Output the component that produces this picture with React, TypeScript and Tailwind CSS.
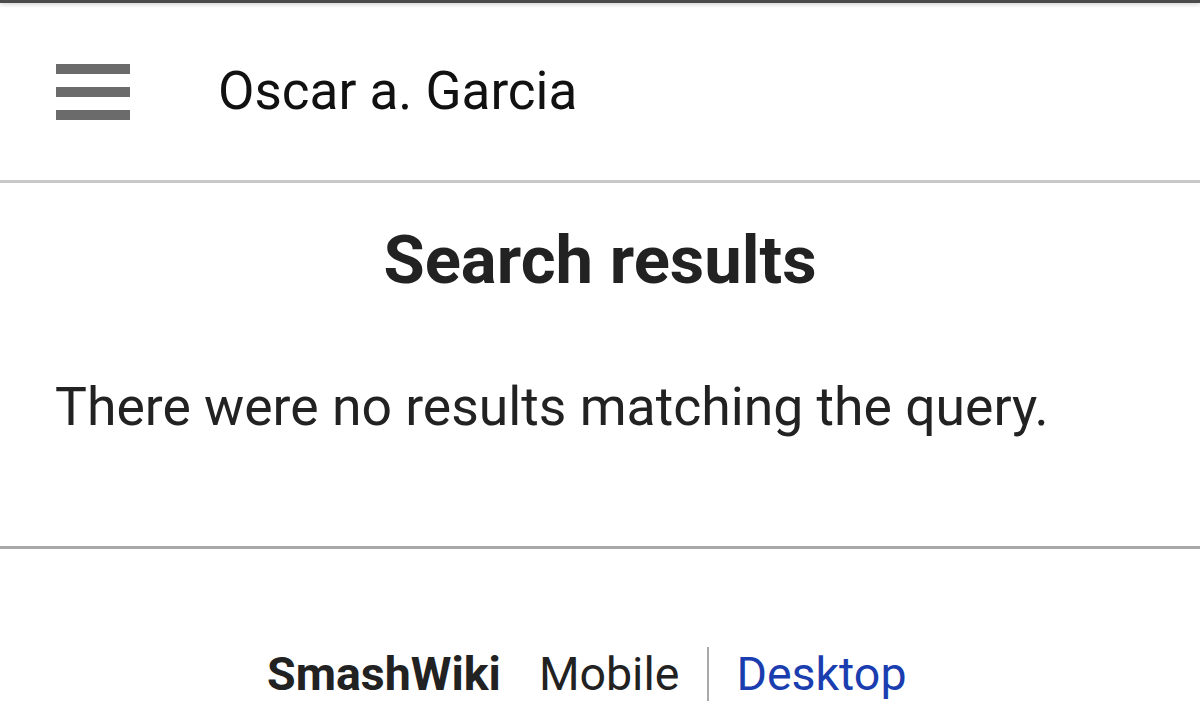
import React from "react";

const Hamburger = () => (
  <div className="flex flex-col gap-[13px] w-[74px]">
    <div className="h-[10px] bg-[#6b6b6b]" />
    <div className="h-[10px] bg-[#6b6b6b]" />
    <div className="h-[10px] bg-[#6b6b6b]" />
  </div>
);

export default function App() {
  return (
    <div className="w-[1200px] h-[719px] bg-white overflow-hidden font-['Roboto',sans-serif]">
      {/* status strip */}
      <div className="h-[3px] bg-[#4b4b4b] shadow-[0_1px_4px_rgba(0,0,0,0.25)]" />

      {/* header */}
      <div className="h-[180px] flex items-center pl-[56px] border-b-[3px] border-[#c8c8c8]">
        <Hamburger />
        <span className="ml-[88px] text-[53px] leading-none text-[#111]">
          Oscar a. Garcia
        </span>
      </div>

      {/* content */}
      <div className="h-[366px] border-b-[3px] border-[#a8a8a8]">
        <h1 className="pt-[44px] text-center text-[67px] leading-none font-bold text-[#222]">
          Search results
        </h1>
        <p className="mt-[86px] pl-[55px] text-[53.5px] leading-none text-[#222]">
          There were no results matching the query.
        </p>
      </div>

      {/* footer */}
      <div className="flex items-center pl-[267px] pt-[98px] text-[46.5px] leading-none">
        <span className="font-bold text-[#222]">SmashWiki</span>
        <span className="ml-[38px] text-[#222]">Mobile</span>
        <span className="ml-[28px] w-[2px] h-[54px] bg-[#aaaaaa]" />
        <span className="ml-[27px] text-[#1a3db0]">Desktop</span>
      </div>
    </div>
  );
}
